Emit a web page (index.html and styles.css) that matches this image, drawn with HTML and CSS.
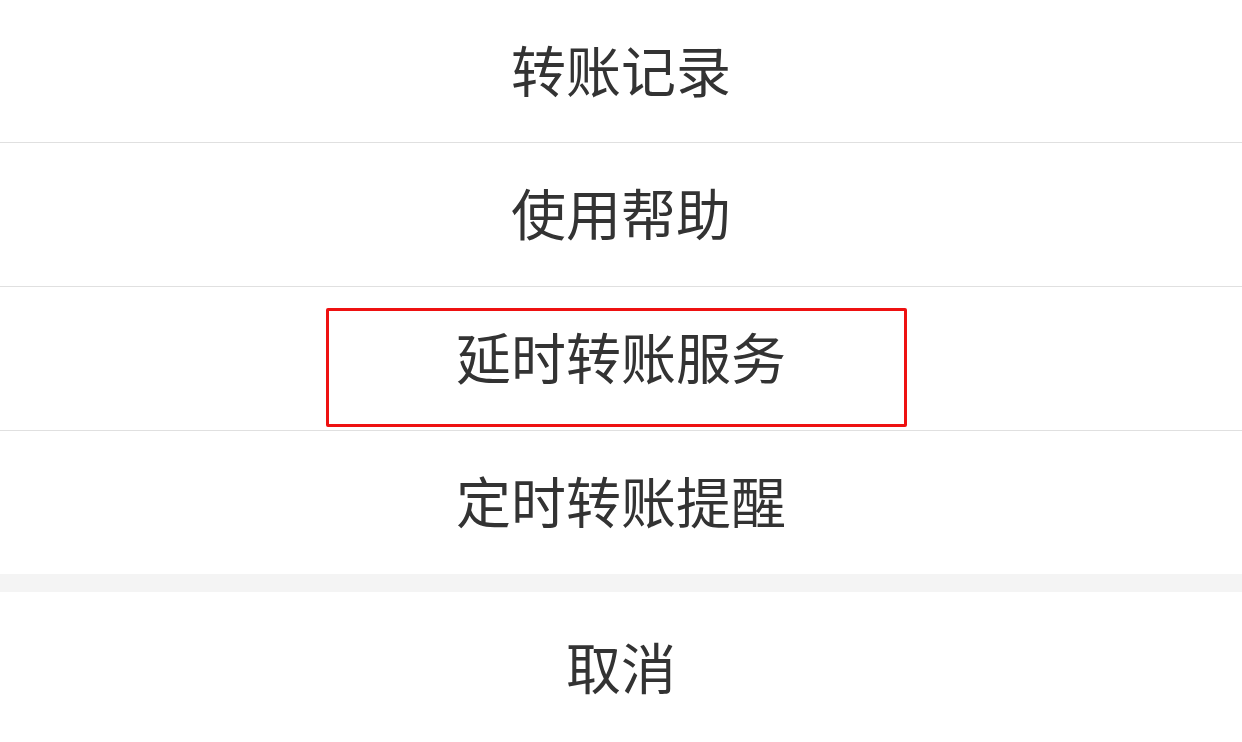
FILE: index.html
```html
<!DOCTYPE html>
<html lang="zh-CN">
<head>
<meta charset="utf-8">
<title>转账菜单</title>
<link rel="stylesheet" href="styles.css">
</head>
<body>
<div class="sheet">
  <div class="menu">
    <div class="item">转账记录</div>
    <div class="item">使用帮助</div>
    <div class="item item-marked">延时转账服务<span class="mark"></span></div>
    <div class="item">定时转账提醒</div>
  </div>
  <div class="spacer"></div>
  <div class="cancel">取消</div>
</div>
</body>
</html>
```
FILE: styles.css
```css
html, body {
  margin: 0;
  padding: 0;
  background: #ffffff;
}
body {
  width: 1242px;
  height: 742px;
  overflow: hidden;
  font-family: "Noto Sans CJK SC", "Noto Sans", sans-serif;
  color: #333333;
}
.sheet {
  display: flex;
  flex-direction: column;
}
.menu {
  display: flex;
  flex-direction: column;
}
.item {
  box-sizing: border-box;
  height: 144px;
  padding-bottom: 6px;
  border-bottom: 1px solid #e0e0e0;
  display: flex;
  align-items: center;
  justify-content: center;
  font-size: 55px;
  line-height: 1;
  position: relative;
}
.item:first-child {
  height: 143px;
}
.item:last-child {
  border-bottom: none;
  height: 143px;
}
.mark {
  position: absolute;
  left: 326px;
  top: 21px;
  width: 581px;
  height: 119px;
  box-sizing: border-box;
  border: 3px solid #ee1111;
  border-radius: 2px;
}
.spacer {
  height: 18px;
  background: #f4f4f4;
}
.cancel {
  box-sizing: border-box;
  height: 150px;
  padding-bottom: 4px;
  display: flex;
  align-items: center;
  justify-content: center;
  font-size: 55px;
  line-height: 1;
}
```
